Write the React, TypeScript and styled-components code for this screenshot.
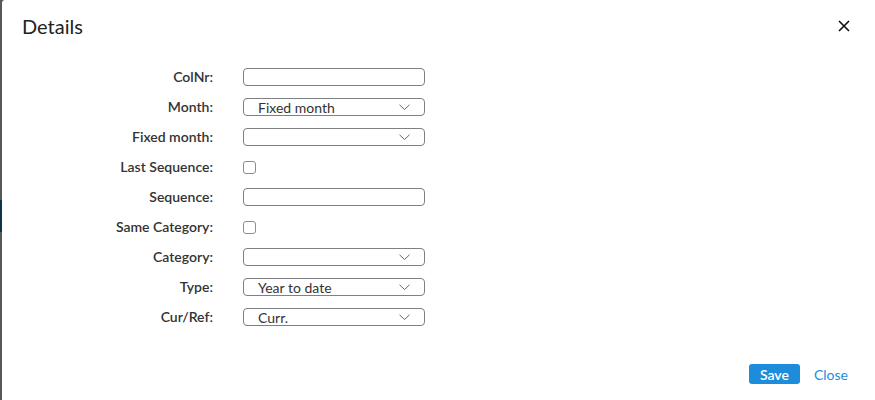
import React from "react";
import styled, { createGlobalStyle } from "styled-components";

const Global = createGlobalStyle`
  html, body { margin: 0; padding: 0; background: #ffffff; }
  body { font-family: Lato, "Open Sans", sans-serif; }
  * { box-sizing: border-box; }
`;

const Screen = styled.div`
  display: flex;
  width: 875px;
  height: 400px;
  background: #4b4f52;
`;

const Backdrop = styled.div`
  width: 2px;
  display: flex;
  flex-direction: column;
  background: #55595c;
`;

const BackdropAccent = styled.div`
  margin-top: 200px;
  height: 32px;
  background: #0c3547;
`;

const Dialog = styled.div`
  flex: 1;
  background: #ffffff;
  border-top-left-radius: 3px;
  display: flex;
  flex-direction: column;
  padding: 0 27px 0 20px;
`;

const Header = styled.div`
  display: flex;
  align-items: center;
  justify-content: space-between;
  height: 56px;
  padding-bottom: 4px;
`;

const Title = styled.h1`
  margin: 0;
  font-family: Lato, sans-serif;
  font-size: 20px;
  font-weight: 400;
  color: #222;
`;

const CloseIcon = styled.button`
  border: none;
  background: none;
  padding: 0;
  width: 12px;
  height: 12px;
  display: flex;
  margin-right: -2px;
  cursor: pointer;
`;

const Form = styled.div`
  display: grid;
  grid-template-columns: 191px 182px;
  column-gap: 30px;
  row-gap: 12px;
  margin-top: 12px;
`;

const Label = styled.div`
  font-size: 14px;
  font-weight: 600;
  color: #333;
  text-align: right;
  height: 18px;
  line-height: 18px;
`;

const Field = styled.div`
  height: 18px;
  border: 1px solid #7d8085;
  border-radius: 4px;
  display: flex;
  align-items: center;
  justify-content: space-between;
  padding: 0 14px 0 14px;
  font-size: 14px;
  color: #333;
`;

const CheckCell = styled.div`
  height: 18px;
  display: flex;
  align-items: center;
`;

const Checkbox = styled.div`
  width: 13px;
  height: 13px;
  border: 1px solid #8a8d92;
  border-radius: 3px;
`;

const Spacer = styled.div`
  flex: 1;
`;

const Footer = styled.div`
  display: flex;
  justify-content: flex-end;
  align-items: center;
  gap: 14px;
  padding-bottom: 16px;
`;

const SaveButton = styled.button`
  background: #1d8ddb;
  color: #fff;
  border: none;
  border-radius: 3px;
  width: 51px;
  height: 20px;
  font-family: Lato, sans-serif;
  font-size: 14px;
  font-weight: 600;
  padding: 0;
`;

const CloseLink = styled.span`
  color: #1d8ddb;
  font-size: 14px;
`;

const Chevron = () => (
  <svg width="11" height="7" viewBox="0 0 11 7">
    <path d="M0.5 0.8 L5.5 5.5 L10.5 0.8" fill="none" stroke="#666" strokeWidth="1" />
  </svg>
);

type Row =
  | { label: string; kind: "input" }
  | { label: string; kind: "select"; value: string }
  | { label: string; kind: "check" };

const rows: Row[] = [
  { label: "ColNr:", kind: "input" },
  { label: "Month:", kind: "select", value: "Fixed month" },
  { label: "Fixed month:", kind: "select", value: "" },
  { label: "Last Sequence:", kind: "check" },
  { label: "Sequence:", kind: "input" },
  { label: "Same Category:", kind: "check" },
  { label: "Category:", kind: "select", value: "" },
  { label: "Type:", kind: "select", value: "Year to date" },
  { label: "Cur/Ref:", kind: "select", value: "Curr." },
];

export default function App() {
  return (
    <>
      <Global />
      <Screen>
        <Backdrop>
          <BackdropAccent />
        </Backdrop>
        <Dialog>
          <Header>
            <Title>Details</Title>
            <CloseIcon aria-label="close">
              <svg width="12" height="12" viewBox="0 0 12 12">
                <path d="M1 1 L11 11 M11 1 L1 11" stroke="#111" strokeWidth="1.6" />
              </svg>
            </CloseIcon>
          </Header>
          <Form>
            {rows.map((r) => (
              <React.Fragment key={r.label}>
                <Label>{r.label}</Label>
                {r.kind === "input" && <Field />}
                {r.kind === "select" && (
                  <Field>
                    <span>{r.value}</span>
                    <Chevron />
                  </Field>
                )}
                {r.kind === "check" && (
                  <CheckCell>
                    <Checkbox />
                  </CheckCell>
                )}
              </React.Fragment>
            ))}
          </Form>
          <Spacer />
          <Footer>
            <SaveButton>Save</SaveButton>
            <CloseLink>Close</CloseLink>
          </Footer>
        </Dialog>
      </Screen>
    </>
  );
}
